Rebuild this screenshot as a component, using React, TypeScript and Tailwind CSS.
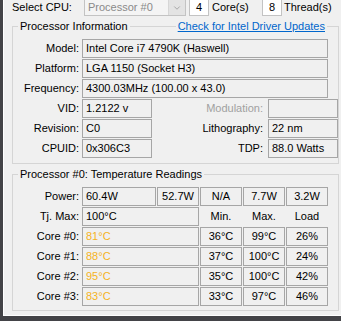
import { ChevronDown } from 'lucide-react'
import type { ReactNode } from 'react'

const cell = 'h-[19px] border border-[#a6a6a6] leading-[17px] whitespace-nowrap overflow-hidden'

type GroupProps = {
	title: string
	link?: string
	children: ReactNode
	className?: string
}

const Group = ({ title, link, children, className }: GroupProps) => {
	return (
		<div className={`flex flex-col ${className ?? ''}`}>
			<div className="flex h-[13px]">
				<div className="w-[6px] h-[7px] self-end border-l border-t border-[#d5d5d5]" />
				<span className="px-[2px] leading-[13px]">{title}</span>
				<div className="flex-1 h-[7px] self-end border-t border-[#d5d5d5]" />
				{link && (
					<span className="px-[2px] leading-[13px] text-[#0066cc] underline">{link}</span>
				)}
				<div className="w-[12px] h-[7px] self-end border-r border-t border-[#d5d5d5]" />
			</div>
			<div className="flex flex-col gap-px border-l border-r border-b border-[#d5d5d5] pt-[6px] pl-px">
				{children}
			</div>
		</div>
	)
}

const Label = ({ children }: { children: ReactNode }) => (
	<span className="w-[65px] mr-[3px] text-right leading-[19px] whitespace-nowrap">{children}</span>
)

const InfoRow = ({ label, value }: { label: string; value: string }) => (
	<div className="flex h-[19px]">
		<Label>{label}</Label>
		<div className={`${cell} w-[246px] pl-[3px]`}>{value}</div>
	</div>
)

const SplitRow = ({
	label,
	value,
	label2,
	value2,
	muted,
}: {
	label: string
	value: string
	label2: string
	value2: string
	muted?: boolean
}) => (
	<div className="flex h-[19px]">
		<Label>{label}</Label>
		<div className={`${cell} w-[70px] pl-[3px]`}>{value}</div>
		<span
			className={`flex-1 text-right pr-[5px] leading-[19px] whitespace-nowrap ${muted ? 'text-[#a0a0a0]' : ''}`}
		>
			{label2}
		</span>
		<div className={`${cell} w-[70px] pl-[3px]`}>{value2}</div>
	</div>
)

const cores = [
	{ name: 'Core #0:', temp: '81°C', min: '36°C', max: '99°C', load: '26%' },
	{ name: 'Core #1:', temp: '88°C', min: '37°C', max: '100°C', load: '24%' },
	{ name: 'Core #2:', temp: '95°C', min: '35°C', max: '100°C', load: '42%' },
	{ name: 'Core #3:', temp: '83°C', min: '33°C', max: '97°C', load: '46%' },
]

export default function App() {
	return (
		<div className="w-[341px] h-[321px] bg-[#434347] overflow-hidden font-['Liberation_Sans',Arial,sans-serif] text-[11px] text-black">
			<div className="ml-[3px] h-[316px] bg-[#f0f0f0] border-l border-b border-white flex flex-col pl-[8px] pr-[2px]">
				{/* top row */}
				<div className="flex h-[16px] items-stretch">
					<span className="w-[72px] leading-[14px]">Select CPU:</span>
					<div className="w-[102px] flex border border-t-0 border-[#c3c3c3] bg-[#f4f4f4]">
						<span className="flex-1 pl-[3px] leading-[14px] text-[#8a8a8a]">Processor #0</span>
						<div className="w-[17px] flex items-center justify-center bg-[#e3e3e3] border-l border-[#d6d6d6]">
							<ChevronDown size={10} strokeWidth={2} className="text-[#9a9a9a]" />
						</div>
					</div>
					<div className="ml-[3px] w-[20px] border border-t-0 border-[#c3c3c3] bg-white text-center leading-[14px]">4</div>
					<span className="ml-[3px] w-[50px] leading-[14px]">Core(s)</span>
					<div className="w-[20px] border border-t-0 border-[#c3c3c3] bg-white text-center leading-[14px]">8</div>
					<span className="ml-[2px] leading-[14px] whitespace-nowrap">Thread(s)</span>
				</div>

				<Group title="Processor Information" link="Check for Intel Driver Updates" className="mt-[4px]">
					<InfoRow label="Model:" value="Intel Core i7 4790K (Haswell)" />
					<InfoRow label="Platform:" value="LGA 1150 (Socket H3)" />
					<InfoRow label="Frequency:" value="4300.03MHz (100.00 x 43.0)" />
					<SplitRow label="VID:" value="1.2122 v" label2="Modulation:" value2="" muted />
					<SplitRow label="Revision:" value="C0" label2="Lithography:" value2="22 nm" />
					<SplitRow label="CPUID:" value="0x306C3" label2="TDP:" value2="88.0 Watts" />
					<div className="h-[4px]" />
				</Group>

				<Group title="Processor #0: Temperature Readings" className="mt-[4px]">
					<div className="flex h-[19px] gap-px">
						<Label>Power:</Label>
						<div className={`${cell} w-[74px] pl-[3px] -ml-px`}>60.4W</div>
						<div className={`${cell} w-[42px] text-center`}>52.7W</div>
						<div className={`${cell} w-[42px] text-center`}>N/A</div>
						<div className={`${cell} w-[42px] text-center`}>7.7W</div>
						<div className={`${cell} w-[42px] text-center`}>3.2W</div>
					</div>
					<div className="flex h-[19px] gap-px">
						<Label>Tj. Max:</Label>
						<div className={`${cell} w-[117px] pl-[3px] -ml-px`}>100°C</div>
						<div className="w-[42px] text-center leading-[19px]">Min.</div>
						<div className="w-[42px] text-center leading-[19px]">Max.</div>
						<div className="w-[42px] text-center leading-[19px]">Load</div>
					</div>
					{cores.map((c) => (
						<div key={c.name} className="flex h-[19px] gap-px">
							<Label>{c.name}</Label>
							<div className={`${cell} w-[117px] pl-[3px] -ml-px text-[#f5b31c]`}>{c.temp}</div>
							<div className={`${cell} w-[42px] text-center`}>{c.min}</div>
							<div className={`${cell} w-[42px] text-center`}>{c.max}</div>
							<div className={`${cell} w-[42px] text-center`}>{c.load}</div>
						</div>
					))}
					<div className="h-[3px]" />
				</Group>
			</div>
		</div>
	)
}
